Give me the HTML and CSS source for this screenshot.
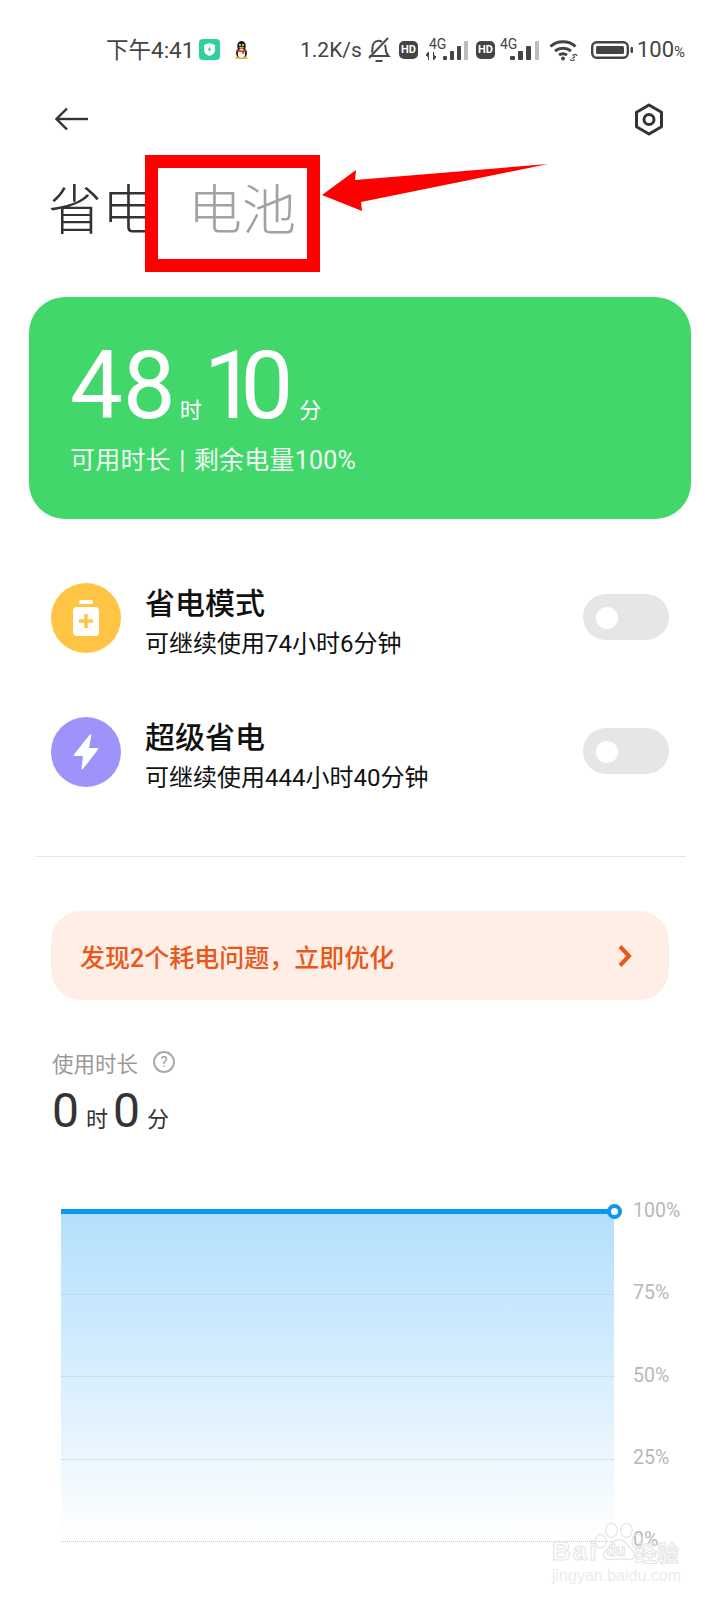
FILE: index.html
```html
<!DOCTYPE html>
<html lang="zh-CN">
<head>
    <meta charset="UTF-8">
    <meta name="viewport" content="width=device-width, initial-scale=1.0">
    <title>省电 电池</title>
    <link rel="stylesheet" href="styles.css">
</head>
<body>
    <div class="status">
        <span class="clock">下午4:41</span>
        <svg class="shield" viewBox="0 0 21 21"><rect width="21" height="21" rx="4" fill="#2fd0a0"/><path d="M10.500 4l5.500 2v5c0 3-2.400 5-5.500 6-3.100-1-5.500-3-5.500-6V6z" fill="#fff"/><path d="M11.200 6.800L8.600 11h1.700l-.6 3 2.700-4.200h-1.700z" fill="#2fd0a0"/></svg>
        <svg class="qq" viewBox="0 0 15 18"><ellipse cx="7.500" cy="5" rx="4.300" ry="5" fill="#1c1c1c"/><ellipse cx="7.500" cy="12" rx="5.500" ry="5.500" fill="#1c1c1c"/><ellipse cx="7.500" cy="12.500" rx="3.600" ry="4.500" fill="#fff"/><path d="M3 8.500c3 1.300 6 1.300 9 0v2c-.6.300-1.200.5-1.800.6V13H8.500v-1.700c-2 .1-4-.2-5.500-.8z" fill="#e02a20"/><ellipse cx="7.500" cy="6.700" rx="2.400" ry="1" fill="#f5b21a"/><circle cx="6" cy="4" r=".9" fill="#fff"/><circle cx="9" cy="4" r=".9" fill="#fff"/><ellipse cx="4" cy="17" rx="3" ry="1" fill="#f5b21a"/><ellipse cx="11" cy="17" rx="3" ry="1" fill="#f5b21a"/></svg>
        <span class="speed">1.2K/s</span>
        <svg class="bell" viewBox="0 0 24 26" fill="none" stroke="#4a4a4a" stroke-width="2"><path d="M2.500 19h19c-2-2-2.800-4-2.800-7 0-1.600-.2-3-.9-4.200M15 5c-1-.8-2.200-1.200-3.300-1.200-4 0-6.200 3.300-6.200 7.200 0 1.800-.2 3.200-.8 4.500"/><path d="M2 21L21 1"/><path d="M8.500 24h7"/></svg>
        <span class="hd">HD</span>
        <div class="signal">
            <span class="net">4G</span>
            <svg class="arrows" viewBox="0 0 10 8"><path d="M2.500 0v8M0 3l2.500-3v5zM7.500 8V0M10 5L7.500 8V3z" fill="#444" stroke="#444" stroke-width="1"/></svg>
            <svg class="bars" viewBox="0 0 25 19"><rect x="0" y="15" width="4" height="4" rx="1" fill="#444"/><rect x="7" y="10" width="4" height="9" rx="1" fill="#444"/><rect x="14" y="5" width="4" height="14" rx="1" fill="#444"/><rect x="21" y="0" width="4" height="19" rx="1" fill="#bdbdbd"/></svg>
        </div>
        <span class="hd">HD</span>
        <div class="signal signal-two">
            <span class="net">4G</span>
            <svg class="bars" viewBox="0 0 29 19"><rect x="0" y="15" width="5" height="4" rx="1" fill="#444"/><rect x="8" y="10" width="5" height="9" rx="1" fill="#444"/><rect x="16" y="5" width="5" height="14" rx="1" fill="#444"/><rect x="25" y="0" width="4" height="19" rx="1" fill="#bdbdbd"/></svg>
        </div>
        <svg class="wifi" viewBox="0 0 30 22" fill="none" stroke="#444" stroke-width="3"><path d="M1.500 7.500C8 1.200 20 1.200 26.500 7.500"/><path d="M6 12c4.700-3.700 11.300-3.700 16 0"/><path d="M10 16c2.400-1.500 5.600-1.500 8 0"/><circle cx="14" cy="19.500" r="2" fill="#444" stroke="none"/><path d="M21 20.500l1.500 1a2 2 0 0 0 2.500-.5l.5-.7M28 17l-.5-.8a2 2 0 0 0-2.700-.4l-1.300 1M23.500 19.500l2.500-2" stroke-width="1.200"/></svg>
        <svg class="battery" viewBox="0 0 42 18"><rect x="1.200" y="1.200" width="35.600" height="15.600" rx="4.500" fill="none" stroke="#444" stroke-width="2.400"/><rect x="5" y="5" width="28" height="8" rx="1.500" fill="#444"/><rect x="39.500" y="6" width="2.500" height="6" rx="1" fill="#444"/></svg>
        <span class="level">100<small>%</small></span>
    </div>

    <div class="nav">
        <svg class="back" viewBox="0 0 34 24" fill="none" stroke="#333" stroke-width="2.400"><path d="M33 12H2"/><path d="M12 1.500L1.500 12 12 22.500"/></svg>
        <svg class="gear" viewBox="0 0 30 33" fill="none" stroke="#333" stroke-width="3"><path d="M15 2l12.500 7.200v14.600L15 31 2.500 23.800V9.200z" stroke-linejoin="round"/><circle cx="15" cy="16.500" r="5"/></svg>
    </div>

    <div class="title">
        <span>省电</span>
        <span class="title-other">电池</span>
    </div>

    <div class="card">
        <div class="time">
            <span class="big">48</span><span class="unit">时</span><span class="big big-ten">10</span><span class="unit unit-last">分</span>
        </div>
        <div class="card-sub">可用时长 | 剩余电量100%</div>
    </div>

    <div class="modes">
        <div class="mode">
            <div class="mode-icon yellow">
                <svg viewBox="0 0 26 36"><rect x="6" y="0" width="14" height="4" rx="2" fill="#fff"/><rect x="0" y="7" width="26" height="29" rx="4" fill="#fff"/><path d="M13 14v14M6 21h14" stroke="#ffc444" stroke-width="3.500" fill="none"/></svg>
            </div>
            <div class="mode-text">
                <div class="mode-name">省电模式</div>
                <div class="mode-desc">可继续使用74小时6分钟</div>
            </div>
            <div class="toggle"><div class="knob"></div></div>
        </div>
        <div class="mode">
            <div class="mode-icon purple">
                <svg viewBox="0 0 26 36"><path d="M16.500 1L1 20.500c-.5.800 0 1.500.8 1.500H10l-1.500 12.500c-.1 1 .8 1.300 1.300.6L25 15.500c.5-.8 0-1.500-.8-1.500H16l2.300-12.200c.2-1.100-1.100-1.600-1.800-.8z" fill="#fff"/></svg>
            </div>
            <div class="mode-text">
                <div class="mode-name">超级省电</div>
                <div class="mode-desc">可继续使用444小时40分钟</div>
            </div>
            <div class="toggle"><div class="knob"></div></div>
        </div>
    </div>

    <div class="divider"></div>

    <div class="banner">
        <span>发现2个耗电问题，立即优化</span>
        <svg viewBox="0 0 16 24" fill="none" stroke="#e9581a" stroke-width="4"><path d="M3 2.500l9 9.500-9 9.500"/></svg>
    </div>

    <div class="usage">
        <div class="usage-label">
            <span>使用时长</span>
            <span class="help">?</span>
        </div>
        <div class="usage-time">
            <span class="usage-num">0</span><span class="usage-unit">时</span><span class="usage-num">0</span><span class="usage-unit">分</span>
        </div>
    </div>

    <div class="chart">
        <div class="plot">
            <div class="line"><div class="dot"></div></div>
            <div class="grid-line"></div>
            <div class="grid-line"></div>
            <div class="grid-line"></div>
            <div class="grid-line"></div>
        </div>
        <div class="labels">
            <span>100%</span>
            <span>75%</span>
            <span>50%</span>
            <span>25%</span>
            <span>0%</span>
        </div>
    </div>

    <!-- annotation drawn over the screenshot -->
    <div class="red-box"></div>
    <svg class="red-arrow" viewBox="0 0 240 60"><path d="M2 35L36 10 35 20 228 4 41 42 42 51z" fill="#f00"/></svg>

    <div class="watermark">
        <svg class="paw" viewBox="0 0 60 46" fill="none" stroke="#e4e4e4" stroke-width="1.500"><ellipse cx="8" cy="22" rx="6.500" ry="8"/><ellipse cx="21" cy="9" rx="7" ry="8.500"/><ellipse cx="39" cy="9" rx="7" ry="8.500"/><ellipse cx="52" cy="22" rx="6.500" ry="8"/><path d="M30 20c-8 0-10 8-16 13-6 6-1 12 6 11 6-1 14-1 20 0 7 1 12-5 6-11-6-5-8-13-16-13z"/></svg>
        <div class="wm-logo"><span class="wm-bai">Bai</span><span class="wm-du">du</span><span class="wm-jy">经验</span></div>
        <div class="wm-url">jingyan.baidu.com</div>
    </div>
</body>
</html>
```

FILE: styles.css
```css
* {
    box-sizing: border-box;
}

html, body {
    margin: 0;
    padding: 0;
}

body {
    position: relative;
    width: 720px;
    height: 1600px;
    overflow: hidden;
    background-color: #fff;
    font-family: Roboto, "Noto Sans CJK SC", sans-serif;
    color: #333;
}

/* status bar */
.status {
    display: flex;
    align-items: center;
    height: 99px;
    padding-left: 106px;
    color: #444;
    font-size: 21px;
}
.clock { width: 93px; margin-bottom: 3px; font-size: 22.500px; white-space: nowrap; }
.shield { width: 21px; height: 21px; }
.qq { width: 15px; height: 18px; margin-left: 14px; }
.speed { width: 63px; margin-left: 51px; white-space: nowrap; }
.bell { width: 24px; height: 26px; margin-left: 4px; }
.hd {
    width: 19px;
    height: 18px;
    margin-left: 8px;
    border-radius: 5px;
    background-color: #444;
    color: #fff;
    font-size: 11px;
    font-weight: 700;
    line-height: 18px;
    text-align: center;
}
.signal {
    position: relative;
    width: 42px;
    height: 24px;
    margin-left: 8px;
}
.signal-two { width: 39px; margin-left: 5px; }
.net {
    position: absolute;
    left: 3px;
    top: 0;
    font-size: 14px;
    line-height: 12px;
}
.signal-two .net { left: 0; }
.arrows {
    position: absolute;
    left: 0;
    bottom: 2px;
    width: 10px;
    height: 8px;
}
.bars {
    position: absolute;
    left: 17px;
    bottom: 2px;
    width: 25px;
    height: 19px;
}
.signal-two .bars { left: 10px; width: 29px; }
.wifi { width: 30px; height: 22px; margin-left: 10px; }
.battery { width: 42px; height: 18px; margin-left: 12px; }
.level { margin-left: 4px; font-size: 22px; white-space: nowrap; }
.level small { font-size: 15px; }

/* header */
.nav {
    display: flex;
    align-items: center;
    justify-content: space-between;
    height: 40px;
    padding: 0 56px 0 55px;
}
.back { width: 34px; height: 24px; }
.gear { width: 30px; height: 33px; }

.title {
    display: flex;
    gap: 32px;
    height: 60px;
    margin-top: 43px;
    padding-left: 48px;
    font-size: 54px;
    font-weight: 300;
    line-height: 60px;
}
.title-other { color: #a2a2a2; }

/* green card */
.card {
    height: 222px;
    margin: 55px 29px 0;
    padding: 39px 0 0 41px;
    border-radius: 36px;
    background-color: #41d76b;
    color: #fff;
}
.time {
    display: flex;
    align-items: baseline;
    height: 100px;
}
.big { font-size: 94px; line-height: 100px; }
.big-ten { letter-spacing: -16px; }
.unit { margin: 0 2px 0 4px; font-size: 22px; }
.unit-last { margin-left: 22px; }
.card-sub {
    margin-top: 9px;
    font-size: 25px;
    line-height: 32px;
    letter-spacing: 0.2px;
    word-spacing: 2px;
    opacity: 0.92;
}

/* save modes */
.modes {
    display: flex;
    flex-direction: column;
    gap: 64px;
    margin-top: 64px;
    padding: 0 51px;
}
.mode {
    display: flex;
    align-items: center;
    height: 70px;
}
.mode-icon {
    display: flex;
    align-items: center;
    justify-content: center;
    width: 70px;
    height: 70px;
    border-radius: 50%;
}
.yellow { background-color: #ffc444; }
.purple { background-color: #9d93fb; }
.mode-icon svg { width: 26px; height: 36px; }
.mode-text {
    flex: 1;
    margin-left: 24px;
    padding-top: 12px;
    color: #111;
}
.mode-name { font-size: 30px; font-weight: 500; line-height: 40px; }
.mode-desc { font-size: 24px; line-height: 40px; }
.toggle {
    width: 86px;
    height: 46px;
    margin-bottom: 2px;
    padding: 13px;
    border-radius: 23px;
    background-color: #e6e6e6;
}
.knob {
    width: 22px;
    height: 22px;
    border-radius: 50%;
    background-color: #fff;
}

.divider {
    height: 1px;
    margin: 69px 34px 0 35px;
    background-color: #e6e6e6;
}

/* optimise banner */
.banner {
    display: flex;
    align-items: center;
    justify-content: space-between;
    height: 89px;
    margin: 54px 51px 0;
    padding: 0 36px 0 29px;
    border-radius: 30px;
    background-color: #ffeee6;
    color: #e9581a;
    font-size: 25px;
    font-weight: 500;
}
.banner svg { width: 16px; height: 24px; }

/* usage */
.usage { margin-top: 46px; padding-left: 52px; }
.usage-label {
    display: flex;
    align-items: center;
    gap: 15px;
    height: 32px;
    color: #999;
    font-size: 21.500px;
}
.help {
    width: 22px;
    height: 22px;
    border: 2px solid #aaa;
    border-radius: 50%;
    font-size: 15px;
    line-height: 18px;
    text-align: center;
}
.usage-time {
    display: flex;
    align-items: baseline;
    height: 62px;
    margin-top: 2px;
}
.usage-num { font-size: 48px; line-height: 62px; }
.usage-unit { margin: 0 5px 0 7px; font-size: 22px; }

/* chart */
.chart {
    display: flex;
    margin-top: 67px;
    padding-left: 61px;
}
.plot {
    position: relative;
    width: 553px;
    height: 333px;
    padding-top: 3px;
    background: linear-gradient(#aeddfc 0, #b7e1fd 5%, #c8e8fe 30%, #e3f3fe 65%, #fff 100%);
    background-size: 100% 330px;
    background-repeat: no-repeat;
}
.line {
    position: absolute;
    top: 0;
    left: 0;
    right: 0;
    height: 5px;
    background-color: #0f96f0;
}
.dot {
    position: absolute;
    right: -8px;
    top: -5px;
    width: 15px;
    height: 15px;
    border: 4px solid #0f96f0;
    border-radius: 50%;
    background-color: #fff;
}
.grid-line {
    height: 82.500px;
    border-bottom: 1px dotted #bccad4;
}
.labels {
    display: flex;
    flex-direction: column;
    justify-content: space-between;
    height: 353px;
    margin: -10px 0 0 19px;
    color: #b8b8b8;
    font-size: 19.500px;
    line-height: 24px;
}

/* things lying on top of the screenshot */
.red-box {
    position: absolute;
    left: 145px;
    top: 155px;
    width: 175px;
    height: 117px;
    border: 13px solid #f00;
}
.red-arrow {
    position: absolute;
    left: 320px;
    top: 160px;
    width: 240px;
    height: 60px;
}
.watermark {
    position: absolute;
    left: 552px;
    top: 1522px;
    width: 130px;
    color: #e6e6e6;
}
.paw {
    position: absolute;
    left: 42px;
    top: 0;
    width: 50px;
    height: 40px;
}
.wm-logo {
    display: flex;
    align-items: center;
    height: 22px;
    margin-top: 18px;
    font-family: "Liberation Sans", sans-serif;
    font-weight: 700;
    color: transparent;
    -webkit-text-stroke: 1px #e4e4e4;
}
.wm-bai { width: 46px; font-size: 26px; letter-spacing: 2px; }
.wm-du { width: 20px; margin-left: 8px; font-size: 16px; }
.wm-jy {
    margin-left: 9px;
    font-family: "Noto Sans CJK SC", sans-serif;
    font-size: 22px;
    white-space: nowrap;
}
.wm-url {
    margin-top: 5px;
    font-family: "Liberation Sans", sans-serif;
    font-size: 16px;
    white-space: nowrap;
    color: #ececec;
}
```
